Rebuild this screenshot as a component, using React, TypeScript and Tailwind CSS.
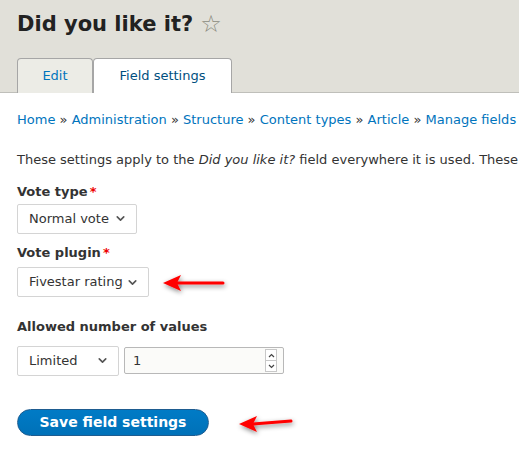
import { ChevronDown } from 'lucide-react'

function Arrow({ className, tilt = 0, len = 60, id }: { className?: string; tilt?: number; len?: number; id: string }) {
  return (
    <svg className={className} width={len + 16} height="34" viewBox={`0 0 ${len + 16} 34`}>
      <defs>
        <filter id={id} x="-30%" y="-60%" width="160%" height="220%">
          <feGaussianBlur in="SourceAlpha" stdDeviation="2.5" />
          <feOffset dx="1" dy="2" />
          <feComponentTransfer>
            <feFuncA type="linear" slope="0.5" />
          </feComponentTransfer>
          <feMerge>
            <feMergeNode />
            <feMergeNode in="SourceGraphic" />
          </feMerge>
        </filter>
      </defs>
      <g filter={`url(#${id})`}>
        <line x1="18" y1="17" x2={len + 4} y2={17 - tilt} stroke="#f00" strokeWidth="3" strokeLinecap="round" />
        <polygon points="4,17 22,9 18,17 22,25" fill="#f00" />
      </g>
    </svg>
  )
}

function Select({ value, width }: { value: string; width: string }) {
  return (
    <div className={`flex h-[30px] items-center justify-between rounded-[2px] border border-[#d4d4d4] bg-white pl-[11px] pr-[9px] ${width}`}>
      <span>{value}</span>
      <ChevronDown size={13} strokeWidth={3} className="text-[#555]" />
    </div>
  )
}

export default function App() {
  return (
    <div className="h-[471px] w-[519px] overflow-hidden bg-white font-['DejaVu_Sans',sans-serif] text-[13px] text-[#333]">
      <div className="border-b border-[#bfbfba] bg-[#e1e0d9] px-[17px] pt-[9px]">
        <h1 className="flex items-center gap-[7px] text-[21px] font-bold leading-[30px] text-[#222]">
          Did you like it?
          <span className="text-[24px] font-normal leading-[30px] text-[#8b8b80]">☆</span>
        </h1>
        <div className="mt-[19px] flex text-[13px]">
          <div className="-mb-px flex h-[35px] w-[76px] items-center justify-center rounded-t-[4px] border border-b-0 border-[#a6a6a6] bg-[#ecece6] text-[#0074bd]">
            Edit
          </div>
          <div className="-mb-px flex h-[35px] w-[139px] items-center justify-center rounded-t-[4px] border border-b-0 border-[#a6a6a6] bg-white text-[#004f80]">
            Field settings
          </div>
        </div>
      </div>

      <div className="px-[17px]">
        <div className="mt-[17px] whitespace-nowrap text-[#0074bd]">
          Home <span className="text-[#333]">»</span> Administration <span className="text-[#333]">»</span> Structure{' '}
          <span className="text-[#333]">»</span> Content types <span className="text-[#333]">»</span> Article{' '}
          <span className="text-[#333]">»</span> Manage fields
        </div>

        <p className="mt-[20px] whitespace-nowrap">
          These settings apply to the <em>Did you like it?</em> field everywhere it is used. These
        </p>

        <div className="mt-[13px] font-bold">
          Vote type<span className="ml-[2px] text-[#e00]">*</span>
        </div>
        <div className="mt-[2px]">
          <Select value="Normal vote" width="w-[120px]" />
        </div>

        <div className="mt-[9px] font-bold">
          Vote plugin<span className="ml-[2px] text-[#e00]">*</span>
        </div>
        <div className="mt-[2px] flex items-center">
          <Select value="Fivestar rating" width="w-[132px]" />
          <Arrow id="a1" className="ml-[10px] mt-[2px]" len={60} />
        </div>

        <div className="mt-[17px] font-bold">Allowed number of values</div>
        <div className="mt-[9px] flex items-center gap-[5px]">
          <Select value="Limited" width="w-[102px]" />
          <div className="flex h-[27px] w-[160px] items-center justify-between rounded-[2px] border border-[#b8b8b8] bg-[#fbfbf9] pl-[8px] pr-[6px]">
            <span>1</span>
            <div className="flex h-[23px] w-[12px] flex-col border border-[#c8c8c8] bg-white">
              <span className="flex flex-1 items-center justify-center border-b border-[#c8c8c8]">
                <svg width="7" height="5" viewBox="0 0 7 5">
                  <path d="M1 4 L3.5 1.5 L6 4" fill="none" stroke="#444" strokeWidth="1.2" />
                </svg>
              </span>
              <span className="flex flex-1 items-center justify-center">
                <svg width="7" height="5" viewBox="0 0 7 5">
                  <path d="M1 1 L3.5 3.5 L6 1" fill="none" stroke="#444" strokeWidth="1.2" />
                </svg>
              </span>
            </div>
          </div>
        </div>

        <div className="mt-[29px] flex items-center">
          <button className="h-[27px] w-[192px] rounded-full border border-[#1e5c90] bg-gradient-to-b from-[#007bc6] to-[#0071b8] text-[14px] font-bold text-white">
            Save field settings
          </button>
          <Arrow id="a2" className="ml-[26px] mt-[2px]" tilt={3} len={52} />
        </div>
      </div>
    </div>
  )
}
